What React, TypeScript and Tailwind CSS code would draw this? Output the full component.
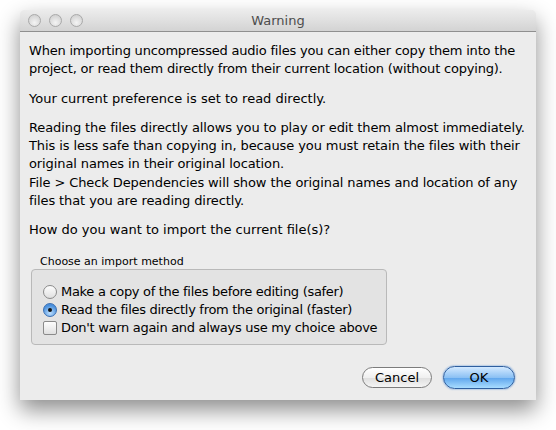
import React from "react"

const font = { fontFamily: '"DejaVu Sans", "Lucida Grande", sans-serif' }

function Light() {
  return (
    <span className="block w-[13px] h-[13px] rounded-full border border-[#a9a9a9] bg-[radial-gradient(circle_at_50%_70%,#f4f4f4,#c9c9c9)]" />
  )
}

function Radio({ checked }: { checked?: boolean }) {
  return checked ? (
    <span className="flex shrink-0 items-center justify-center w-[14px] h-[14px] rounded-full border border-[#3a6fb3] bg-[radial-gradient(circle_at_50%_75%,#bfe0ff,#4a90dc_70%)]">
      <span className="block w-[4px] h-[4px] rounded-full bg-[#111]" />
    </span>
  ) : (
    <span className="block shrink-0 w-[14px] h-[14px] rounded-full border border-[#8a8a8a] bg-[linear-gradient(#fdfdfd,#e0e0e0)]" />
  )
}

export default function App() {
  return (
    <div className="w-[556px] h-[430px] bg-white pt-[10px] pl-[20px]" style={font}>
      <div className="w-[516px] h-[390px] flex flex-col bg-[#ececec] rounded-t-[5px] shadow-[0_10px_22px_rgba(0,0,0,0.45)] text-[13px] text-black">
        {/* title bar */}
        <div className="relative h-[22px] flex items-center justify-center rounded-t-[5px] border-b border-[#8f8f8f] bg-[linear-gradient(#ececec,#d3d3d3)]">
          <div className="absolute left-[8px] top-[4px] flex gap-[8px]">
            <Light />
            <Light />
            <Light />
          </div>
          <span className="text-[#4d4d4d]">Warning</span>
        </div>

        {/* body */}
        <div className="flex-1 flex flex-col pl-[9px] pr-[10px] pt-[10px] leading-[18.3px] whitespace-nowrap">
          <p className="tracking-[-0.2px]">
            When importing uncompressed audio files you can either copy them into the
            <br />
            project, or read them directly from their current location (without copying).
          </p>
          <p className="mt-[11px]">Your current preference is set to read directly.</p>
          <p className="mt-[11px] tracking-[-0.1px]">
            Reading the files directly allows you to play or edit them almost immediately.
            <br />
            This is less safe than copying in, because you must retain the files with their
            <br />
            original names in their original location.
            <br />
            File &gt; Check Dependencies will show the original names and location of any
            <br />
            files that you are reading directly.
          </p>
          <p className="mt-[11px]">How do you want to import the current file(s)?</p>

          {/* group */}
          <div className="ml-[2px] mt-[15px] w-[356px]">
            <div className="pl-[9px] text-[11px] leading-[14px]">Choose an import method</div>
            <div className="h-[76px] rounded-[4px] border border-[#b9b9b9] bg-[#e3e3e3] pl-[11px] pt-[15px] flex flex-col gap-[4px] leading-[14px] tracking-[-0.3px]">
              <div className="flex items-center gap-[4px]">
                <Radio />
                <span>Make a copy of the files before editing (safer)</span>
              </div>
              <div className="flex items-center gap-[4px]">
                <Radio checked />
                <span>Read the files directly from the original (faster)</span>
              </div>
              <div className="flex items-center gap-[4px]">
                <span className="block shrink-0 w-[14px] h-[14px] rounded-[2px] border border-[#8a8a8a] bg-[linear-gradient(#fdfdfd,#e0e0e0)]" />
                <span>Don't warn again and always use my choice above</span>
              </div>
            </div>
          </div>

          {/* buttons */}
          <div className="mt-auto mb-[11px] flex justify-end items-center gap-[11px] pr-[11px]">
            <button className="w-[70px] h-[21px] rounded-full border border-[#7c7c7c] bg-[linear-gradient(#ffffff,#f0f0f0_50%,#dedede_51%,#f5f5f5)] leading-[19px]" style={font}>
              Cancel
            </button>
            <button className="w-[72px] h-[23px] rounded-full border border-[#2f5f9f] bg-[linear-gradient(#d3e9ff,#8cc1f4_50%,#5ea4ec_51%,#a8dcff)] shadow-[0_0_2px_#4a89d6] leading-[21px]" style={font}>
              OK
            </button>
          </div>
        </div>
      </div>
    </div>
  )
}
